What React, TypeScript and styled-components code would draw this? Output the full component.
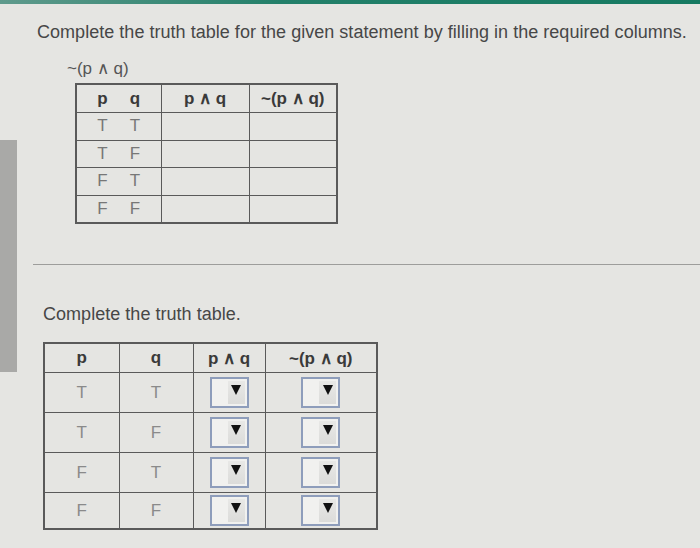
import styled, { createGlobalStyle } from 'styled-components';

const GlobalStyle = createGlobalStyle`
  html, body {
    margin: 0;
    padding: 0;
    background: #e5e5e2;
  }
  body {
    font-family: "Liberation Sans", Arial, sans-serif;
  }
`;

const Page = styled.div`
  width: 700px;
  height: 548px;
  display: flex;
  flex-direction: column;
  overflow: hidden;
  background: #e5e5e2;
`;

const TopBar = styled.div`
  height: 4px;
  background: linear-gradient(90deg, #5f9a8c 0%, #23806a 40%, #167a62 100%);
  flex-shrink: 0;
`;

const Body = styled.div`
  display: flex;
  flex: 1;
`;

const Side = styled.div`
  width: 17px;
  padding-top: 136px;
  flex-shrink: 0;
`;

const SideBlock = styled.div`
  height: 232px;
  background: #a9a9a7;
`;

const Main = styled.div`
  flex: 1;
  display: flex;
  flex-direction: column;
`;

const Heading = styled.div<{ $left: number; $top: number }>`
  margin: ${(p) => p.$top}px 0 0 ${(p) => p.$left}px;
  font-size: 18px;
  line-height: 20px;
  color: #474747;
  letter-spacing: 0.03px;
  white-space: nowrap;
`;

const Formula = styled.div`
  margin: 18px 0 0 50px;
  font-size: 17px;
  line-height: 18px;
  color: #555;
`;

const SmallTable = styled.table`
  margin: 5px 0 0 58px;
  border-collapse: collapse;
  width: 261px;
  table-layout: fixed;
  border: 2px solid #5a5a5a;

  th, td {
    border: 1.5px solid #5a5a5a;
    padding: 0;
    text-align: center;
    font-size: 17px;
  }
  th {
    height: 27px;
    color: #3a3a3a;
    font-weight: bold;
  }
  td {
    height: 26.5px;
    color: #777;
  }
`;

const Pair = styled.span`
  display: inline-flex;
  gap: 22px;
`;

const Divider = styled.div`
  margin: 40px 0 0 16px;
  height: 1px;
  background: #9d9d9b;
`;

const BigTable = styled.table`
  margin: 18px 0 0 26px;
  border-collapse: collapse;
  width: 333px;
  table-layout: fixed;
  border: 2px solid #5a5a5a;

  th, td {
    border: 1.5px solid #5a5a5a;
    padding: 0;
    text-align: center;
    font-size: 17px;
  }
  th {
    height: 28px;
    color: #3a3a3a;
    font-weight: bold;
  }
  td {
    height: 39px;
    color: #8a8a8a;
  }
  tr:last-child td {
    height: 35px;
  }
`;

const Select = styled.div`
  display: inline-flex;
  justify-content: flex-end;
  width: 39px;
  height: 31px;
  box-sizing: border-box;
  border: 2px solid #8e9dbb;
  background: #f1f1ef;
  vertical-align: middle;
`;

const SelectButton = styled.div`
  width: 17px;
  margin: 2px 2px 2px 0;
  background: linear-gradient(180deg, #e8e8e6 0%, #dcdcda 100%);
  display: flex;
  justify-content: center;
  padding-top: 4px;
  box-sizing: border-box;
`;

const Arrow = styled.div`
  width: 0;
  height: 0;
  border-left: 5px solid transparent;
  border-right: 5px solid transparent;
  border-top: 10px solid #111;
`;

const rows = [
  ['T', 'T'],
  ['T', 'F'],
  ['F', 'T'],
  ['F', 'F'],
];

function Dropdown() {
  return (
    <Select>
      <SelectButton>
        <Arrow />
      </SelectButton>
    </Select>
  );
}

export default function App() {
  return (
    <Page>
      <GlobalStyle />
      <TopBar />
      <Body>
        <Side>
          <SideBlock />
        </Side>
        <Main>
          <Heading $left={20} $top={18}>
            Complete the truth table for the given statement by filling in the required columns.
          </Heading>
          <Formula>~(p ∧ q)</Formula>
          <SmallTable>
            <colgroup>
              <col style={{ width: 85 }} />
              <col style={{ width: 88 }} />
              <col style={{ width: 88 }} />
            </colgroup>
            <thead>
              <tr>
                <th>
                  <Pair>
                    <span>p</span>
                    <span>q</span>
                  </Pair>
                </th>
                <th>p ∧ q</th>
                <th>~(p ∧ q)</th>
              </tr>
            </thead>
            <tbody>
              {rows.map(([p, q], i) => (
                <tr key={i}>
                  <td>
                    <Pair>
                      <span>{p}</span>
                      <span>{q}</span>
                    </Pair>
                  </td>
                  <td />
                  <td />
                </tr>
              ))}
            </tbody>
          </SmallTable>
          <Divider />
          <Heading $left={26} $top={39}>
            Complete the truth table.
          </Heading>
          <BigTable>
            <colgroup>
              <col style={{ width: 75 }} />
              <col style={{ width: 74 }} />
              <col style={{ width: 72 }} />
              <col style={{ width: 112 }} />
            </colgroup>
            <thead>
              <tr>
                <th>p</th>
                <th>q</th>
                <th>p ∧ q</th>
                <th>~(p ∧ q)</th>
              </tr>
            </thead>
            <tbody>
              {rows.map(([p, q], i) => (
                <tr key={i}>
                  <td>{p}</td>
                  <td>{q}</td>
                  <td>
                    <Dropdown />
                  </td>
                  <td>
                    <Dropdown />
                  </td>
                </tr>
              ))}
            </tbody>
          </BigTable>
        </Main>
      </Body>
    </Page>
  );
}
